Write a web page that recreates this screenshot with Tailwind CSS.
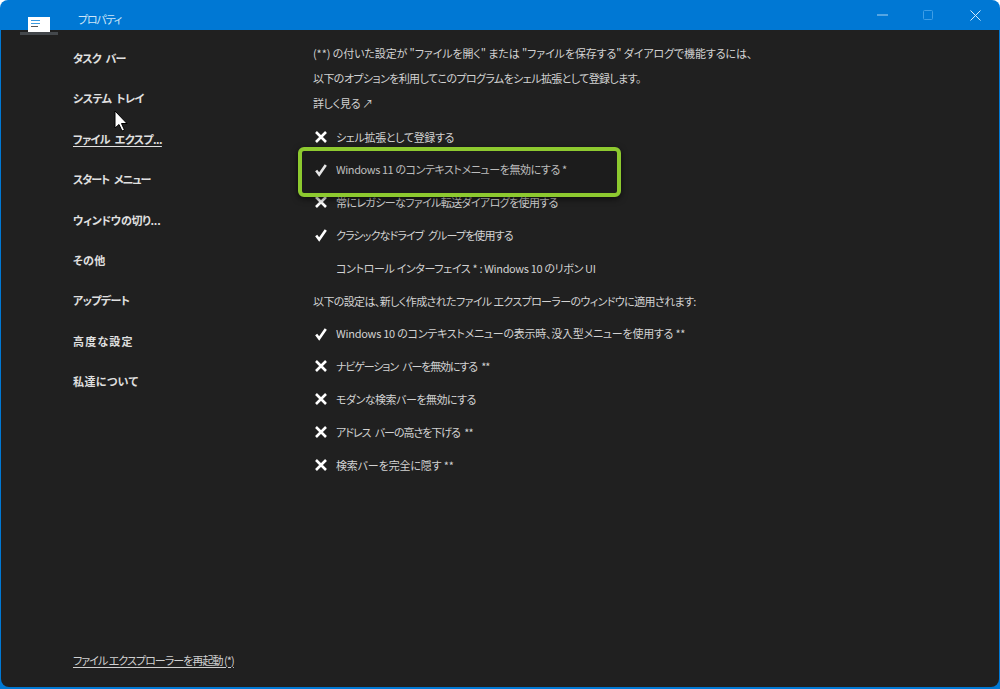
<!DOCTYPE html>
<html lang="ja">
<head>
    <meta charset="UTF-8">
    <title>プロパティ</title>
    <script src="https://cdn.jsdelivr.net/npm/@tailwindcss/browser@4"></script>
</head>
<body class="bg-white">
    <div class="relative w-[1000px] h-[689px] overflow-hidden rounded-t-[8px] bg-[#0078d4] font-['Noto_Sans_CJK_JP','Noto_Sans',sans-serif] [font-feature-settings:'palt'] text-[11px] text-[#e0e0e0]">
        <!-- title bar -->
        <div class="flex h-[30px] items-center">
            <div class="relative w-[78px] h-full">
                <div class="absolute left-[28px] top-[17px] w-[22px] h-[15px] bg-white flex flex-col gap-[2px] pl-[3px] pt-[3px]">
                    <span class="block w-[9px] h-[1px] bg-[#3a9ae0]"></span>
                    <span class="block w-[9px] h-[1px] bg-[#3a9ae0]"></span>
                    <span class="block w-[7px] h-[1px] bg-[#555]"></span>
                </div>
            </div>
            <span class="mt-[9px] text-[#cfe6f8] leading-none tracking-[-1.2px]">プロパティ</span>
            <div class="ml-auto flex items-center">
                <svg class="mr-[35px]" width="11" height="2" viewBox="0 0 11 2"><path d="M0 1h11" stroke="#a9d3f2" stroke-width="1"/></svg>
                <svg class="mr-[37px]" width="10" height="10" viewBox="0 0 10 10"><rect x="0.5" y="0.5" width="9" height="9" rx="1" fill="none" stroke="#3f9ee6"/></svg>
                <svg class="mr-[19px]" width="11" height="11" viewBox="0 0 11 11"><path d="M0.5 0.5l10 10M10.5 0.5l-10 10" stroke="#d5eafa" stroke-width="1"/></svg>
            </div>
        </div>

        <!-- body -->
        <div class="flex h-[657px] mx-px rounded-b-[8px] bg-[#202020]">
            <nav class="flex flex-col w-[312px] pl-[72px] pt-[8px] pb-[19px] font-bold">
                <div class="flex flex-col">
                    <a class="flex items-center h-[40.4px] tracking-[-0.8px] [word-spacing:3px]">タスク バー</a>
                    <a class="flex items-center h-[40.4px] tracking-[-0.55px] [word-spacing:3px]">システム トレイ</a>
                    <a class="flex items-center h-[40.4px] tracking-[-0.6px] [word-spacing:3px]"><span class="underline underline-offset-2">ファイル エクスプ...</span></a>
                    <a class="flex items-center h-[40.4px] tracking-[-1px] [word-spacing:3px]">スタート メニュー</a>
                    <a class="flex items-center h-[40.4px] tracking-[-0.3px]">ウィンドウの切り...</a>
                    <a class="flex items-center h-[40.4px] tracking-[0.3px]">その他</a>
                    <a class="flex items-center h-[40.4px] tracking-[-0.6px]">アップデート</a>
                    <a class="flex items-center h-[40.4px] tracking-[1.2px]">高度な設定</a>
                    <a class="flex items-center h-[40.4px] tracking-[0.4px]">私達について</a>
                </div>
                <a class="mt-auto font-normal text-[#d0d0d0] underline underline-offset-2 tracking-[-0.95px]">ファイル エクスプローラーを再起動 (*)</a>
            </nav>

            <main class="flex flex-col pt-[11px] text-[#d2d2d2]">
                <p class="flex items-center h-[25px] tracking-[-0.1px]">(**) の付いた設定が "ファイルを開く" または "ファイルを保存する" ダイアログで機能するには、</p>
                <p class="flex items-center h-[25px] tracking-[-0.6px]">以下のオプションを利用してこのプログラムをシェル拡張として登録します。</p>
                <p class="flex items-center h-[25px] mb-[4.5px] tracking-[-0.3px]">詳しく見る ↗</p>

                <div class="flex items-center h-[32.8px] gap-[9px]">
                    <svg class="ml-px" width="14" height="14" viewBox="0 0 14 14"><path d="M2 2l10 10M12 2L2 12" stroke="#fff" stroke-width="2.6"/></svg>
                    <span class="-ml-px tracking-[-0.33px]">シェル拡張として登録する</span>
                </div>
                <div class="flex items-center h-[32.8px] gap-[9px]">
                    <svg class="ml-px" width="14" height="14" viewBox="0 0 14 14"><path d="M2.2 7.5l3 4L11.8 2" fill="none" stroke="#fff" stroke-width="2.6"/></svg>
                    <span class="-ml-px tracking-[-0.42px]">Windows 11 のコンテキストメニューを無効にする *</span>
                </div>
                <div class="flex items-center h-[32.8px] gap-[9px]">
                    <svg class="ml-px" width="14" height="14" viewBox="0 0 14 14"><path d="M2 2l10 10M12 2L2 12" stroke="#fff" stroke-width="2.6"/></svg>
                    <span class="-ml-px tracking-[-0.63px]">常にレガシーなファイル転送ダイアログを使用する</span>
                </div>
                <div class="flex items-center h-[32.8px] gap-[9px]">
                    <svg class="ml-px" width="14" height="14" viewBox="0 0 14 14"><path d="M2.2 7.5l3 4L11.8 2" fill="none" stroke="#fff" stroke-width="2.6"/></svg>
                    <span class="-ml-px tracking-[-0.88px] [word-spacing:3px]">クラシックなドライブ グループを使用する</span>
                </div>
                <div class="flex items-center h-[32.8px] gap-[9px]">
                    <span class="w-[14px]"></span>
                    <span class="tracking-[-0.35px]">コントロール インターフェイス * : Windows 10 のリボン UI</span>
                </div>
                <p class="flex items-center h-[32.8px] tracking-[-0.62px]">以下の設定は、新しく作成されたファイル エクスプローラーのウィンドウに適用されます:</p>
                <div class="flex items-center h-[32.8px] gap-[9px]">
                    <svg class="ml-px" width="14" height="14" viewBox="0 0 14 14"><path d="M2.2 7.5l3 4L11.8 2" fill="none" stroke="#fff" stroke-width="2.6"/></svg>
                    <span class="-ml-px tracking-[-0.25px]">Windows 10 のコンテキストメニューの表示時、没入型メニューを使用する **</span>
                </div>
                <div class="flex items-center h-[32.8px] gap-[9px]">
                    <svg class="ml-px" width="14" height="14" viewBox="0 0 14 14"><path d="M2 2l10 10M12 2L2 12" stroke="#fff" stroke-width="2.6"/></svg>
                    <span class="-ml-px tracking-[-1.15px] [word-spacing:3px]">ナビゲーション バーを無効にする **</span>
                </div>
                <div class="flex items-center h-[32.8px] gap-[9px]">
                    <svg class="ml-px" width="14" height="14" viewBox="0 0 14 14"><path d="M2 2l10 10M12 2L2 12" stroke="#fff" stroke-width="2.6"/></svg>
                    <span class="-ml-px tracking-[-0.5px]">モダンな検索バーを無効にする</span>
                </div>
                <div class="flex items-center h-[32.8px] gap-[9px]">
                    <svg class="ml-px" width="14" height="14" viewBox="0 0 14 14"><path d="M2 2l10 10M12 2L2 12" stroke="#fff" stroke-width="2.6"/></svg>
                    <span class="-ml-px tracking-[-1.05px] [word-spacing:3px]">アドレス バーの高さを下げる **</span>
                </div>
                <div class="flex items-center h-[32.8px] gap-[9px]">
                    <svg class="ml-px" width="14" height="14" viewBox="0 0 14 14"><path d="M2 2l10 10M12 2L2 12" stroke="#fff" stroke-width="2.6"/></svg>
                    <span class="-ml-px tracking-[-0.15px]">検索バーを完全に隠す **</span>
                </div>
            </main>
        </div>

        <!-- callout drawn over the screenshot -->
        <div class="absolute left-[298px] top-[147px] w-[323px] h-[50px] rounded-[6px] border-[4px] border-[#8dc92f] bg-black/10 shadow-[0_2px_6px_rgba(0,0,0,0.6)]"></div>

        <!-- app icon shadow strip -->
        <div class="absolute left-[20px] top-[32px] w-[38px] h-[3px] bg-[#44484c]"></div>

        <!-- mouse cursor -->
        <svg class="absolute left-[114px] top-[110px]" width="15" height="23" viewBox="0 0 15 23"><path d="M1 1v17l4-3.5 3 6.5 2.5-1-3-6.5H13z" fill="#fff" stroke="#000" stroke-width="1"/></svg>
    </div>
</body>
</html>
